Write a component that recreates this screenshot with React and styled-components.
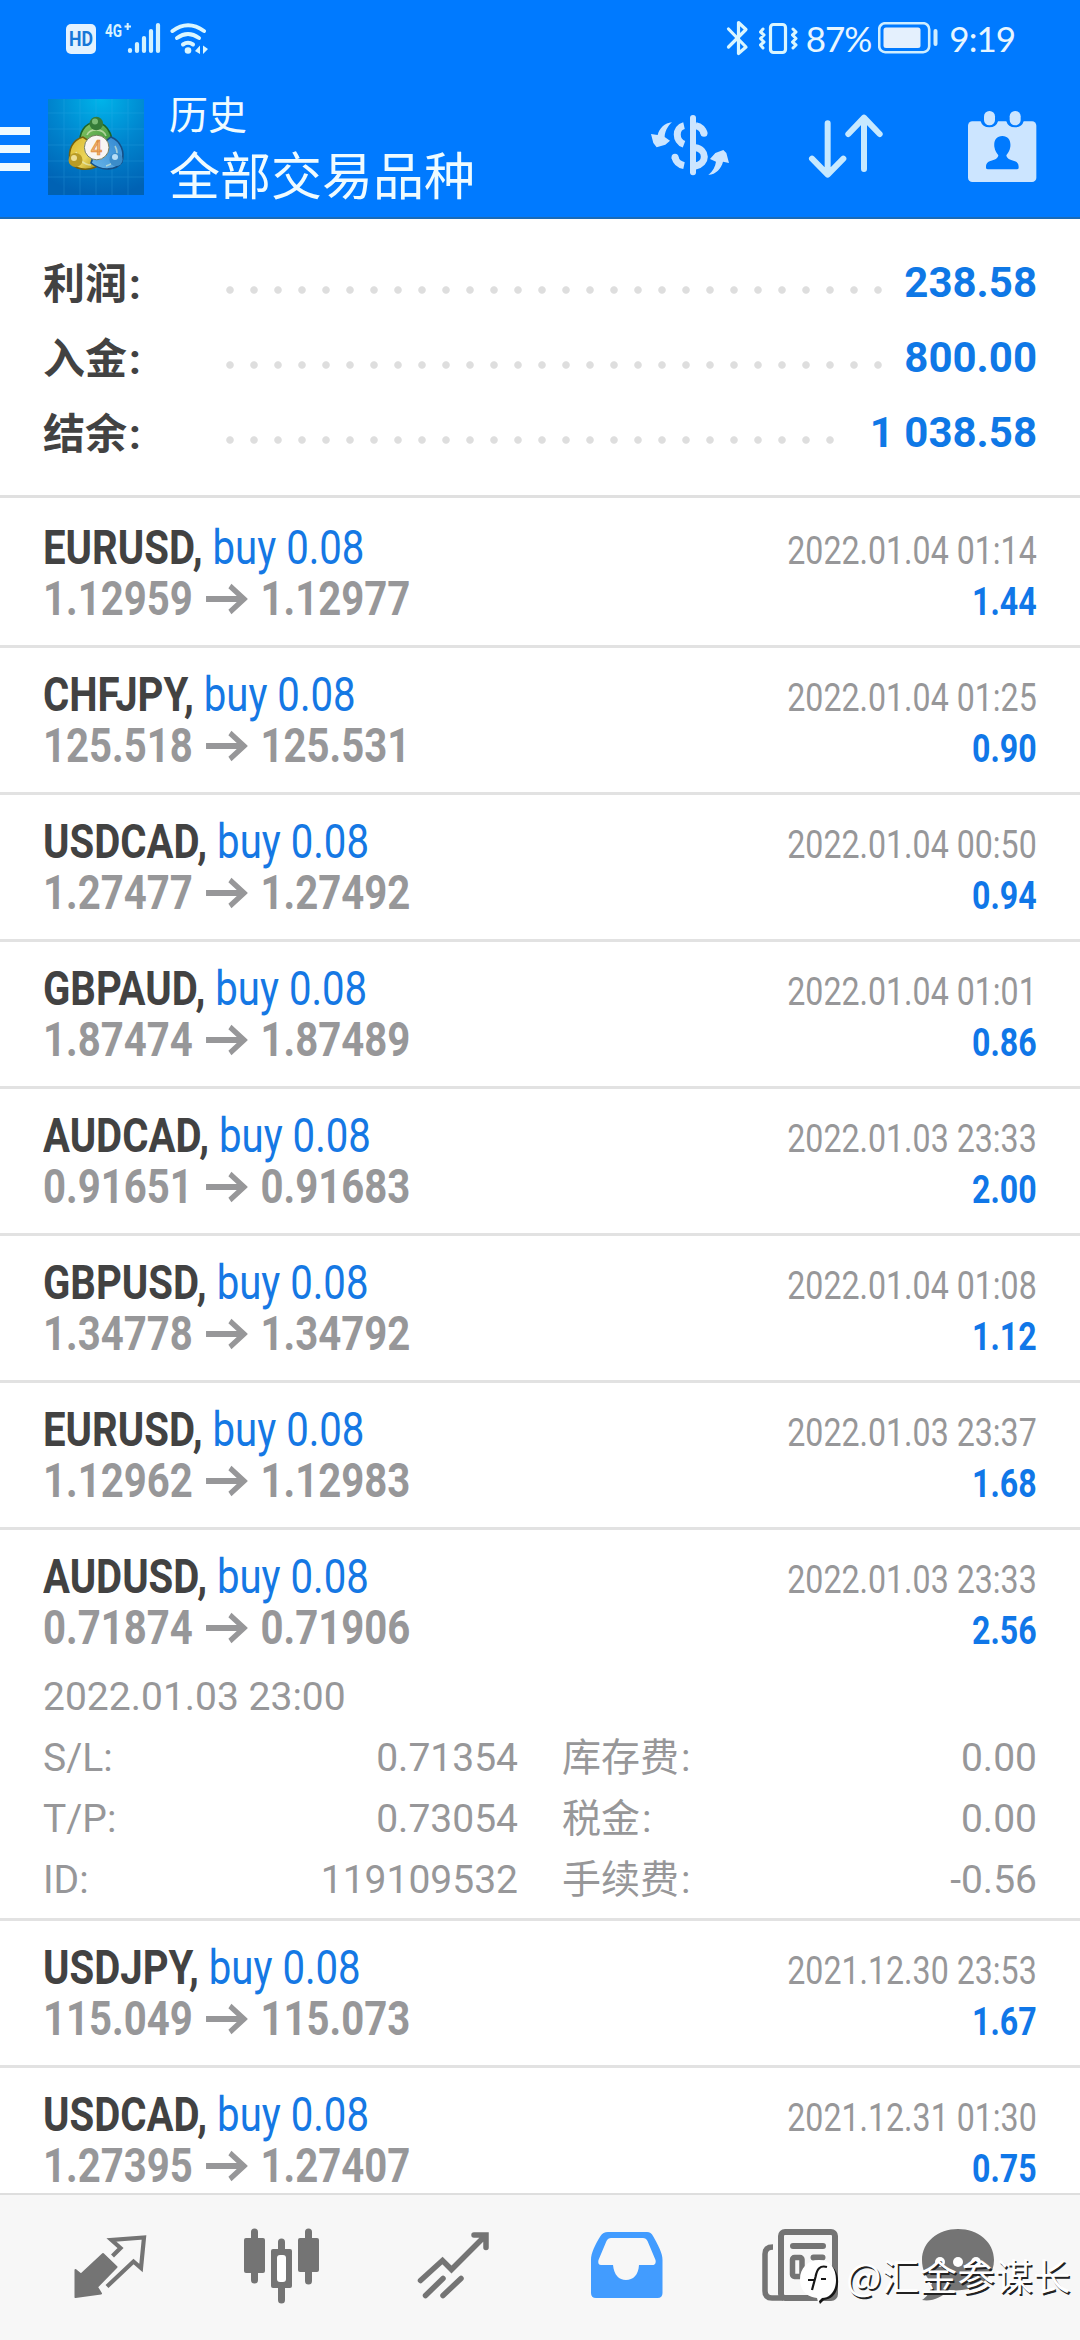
import React from "react";
import styled, { createGlobalStyle } from "styled-components";

const GlobalStyle = createGlobalStyle`
  * { box-sizing: border-box; }
  html, body { margin: 0; padding: 0; background: #fff; }
`;

const BLUE = "#007aff";
const PALE = "#cce5ff";
const GRAY = "#747474";

const Screen = styled.div`
  width: 1080px;
  height: 2340px;
  display: flex;
  flex-direction: column;
  overflow: hidden;
  background: #fff;
  font-family: Roboto, "Noto Sans CJK SC", sans-serif;
`;

const Header = styled.header`
  flex: none;
  height: 219px;
  background: ${BLUE};
  border-bottom: 2px solid #1a6bb8;
`;

const StatusBar = styled.div`
  height: 75px;
  display: flex;
  justify-content: space-between;
  padding: 0 65px;
`;

const StatusGroup = styled.div`
  display: flex;
  align-items: center;
`;

const StatusText = styled.span`
  font-family: Lato, Roboto, sans-serif;
  font-size: 35px;
  line-height: 75px;
  letter-spacing: -1px;
  color: #e8f6ff;
  margin: 2px ${(p) => p.$right || 0}px 0 ${(p) => p.$left || 0}px;
`;

const Toolbar = styled.div`
  display: flex;
  height: 142px;
`;

const Burger = styled.div`
  width: 30px;
  display: flex;
  flex-direction: column;
  gap: 10px;
  padding-top: 52px;
  margin-right: 18px;
`;

const BurgerLine = styled.span`
  height: 8px;
  background: #ecfaff;
`;

const LogoBox = styled.div`
  width: 96px;
  padding-top: 24px;
  margin-right: 25px;
`;

const Titles = styled.div`
  flex: 1;
  padding-top: 16px;
  color: #effbff;
`;

const Caption = styled.div`
  font-size: 39px;
  line-height: 50px;
`;

const Title = styled.div`
  font-size: 51px;
  line-height: 60px;
  margin-top: 7px;
`;

const Actions = styled.div`
  display: grid;
  grid-template-columns: repeat(3, 156px);
  place-items: center;
`;

const Summary = styled.section`
  flex: none;
  height: 279px;
  padding: 26px 43px 0;
  border-bottom: 3px solid #e0e0e0;
`;

const SummaryRow = styled.div`
  display: flex;
  height: 75px;
  font-size: 42px;
  font-weight: 700;
  line-height: 75px;
`;

const SummaryLabel = styled.span`
  width: 183px;
  padding-top: 2px;
  color: #424242;
`;

const Colon = styled.span`
  margin-left: 2px;
`;

const Leader = styled.span`
  width: ${(p) => p.$count * 24}px;
  height: 8px;
  margin-top: 41px;
  background: radial-gradient(circle at 4px 4px, #dedede 3.3px, transparent 4.2px) 0 0 / 24px 8px repeat-x;
`;

const SummaryValue = styled.span`
  flex: 1;
  text-align: right;
  color: #0f78e6;
`;

const List = styled.main`
  flex: 1;
  min-height: 0;
  overflow: hidden;
  padding-top: 3px;
`;

const Deal = styled.article`
  padding: 21px 43px ${(p) => (p.$open ? 7 : 21)}px;
  border-bottom: 3px solid #e2e2e2;
`;

const DealMain = styled.div`
  display: flex;
  justify-content: space-between;
  height: 102px;
`;

const Left = styled.div`
  font-size: 48px;
  line-height: 51px;
  white-space: nowrap;
  transform: scaleX(0.836);
  transform-origin: 0 0;
`;

const Right = styled.div`
  padding-top: 4px;
  font-size: 39px;
  line-height: 51px;
  text-align: right;
  white-space: nowrap;
  color: #979799;
  transform: scaleX(0.824);
  transform-origin: 100% 0;
`;

const Symbol = styled.span`
  font-weight: 700;
  color: #424242;
`;

const Volume = styled.span`
  color: #1578e4;
`;

const Prices = styled.div`
  display: flex;
  align-items: center;
  font-weight: 700;
  color: #979799;
`;

const ArrowIcon = styled.svg`
  width: 51px;
  height: 32px;
  margin: 0 15px;
`;

const Profit = styled.div`
  font-weight: 700;
  color: #1077e8;
`;

const Details = styled.div`
  margin-top: 14px;
  display: grid;
  grid-template-columns: 475px 475px;
  column-gap: 44px;
  font-size: 39px;
  line-height: 61px;
  color: #979799;
`;

const OpenTime = styled.div`
  grid-column: 1 / -1;
`;

const Detail = styled.div`
  display: flex;
  justify-content: space-between;
`;

const Nav = styled.nav`
  position: relative;
  flex: none;
  height: 147px;
  background: #f7f7f7;
  border-top: 2px solid #dedede;
  display: grid;
  grid-template-columns: 172px 172px 172px 174px 172px 144px;
  padding: 32px 0 0 24px;
  justify-items: center;
  align-items: start;
`;

const Watermark = styled.div`
  position: absolute;
  right: 9px;
  top: 61px;
  display: flex;
  align-items: flex-start;
  gap: 6px;
  color: #fff;
  font-family: "Noto Sans CJK SC", sans-serif;
  font-size: 37.3px;
  line-height: 38px;
  letter-spacing: 0.5px;
  text-shadow: 1.5px 1.5px 0 #222;
`;

const WatermarkIcon = styled.svg`
  width: 40px;
  height: 46px;
  margin-top: 3px;
`;

const NavIcon = ({ x, children }) => (
  <svg width="80" height="80" viewBox={`${x} 2227 80 80`} fill="none">
    {children}
  </svg>
);

const Logo = () => (
  <svg width="96" height="96" viewBox="0 0 96 96">
    <defs>
      <radialGradient id="sky" cx="0.55" cy="0" r="1">
        <stop offset="0" stopColor="#00b4ea" />
        <stop offset="0.5" stopColor="#0086cf" />
        <stop offset="1" stopColor="#0062b4" />
      </radialGradient>
      <linearGradient id="green" x1="0" y1="0" x2="1" y2="1">
        <stop offset="0" stopColor="#8cc866" />
        <stop offset="1" stopColor="#2b8a35" />
      </linearGradient>
      <linearGradient id="gold" x1="0" y1="0" x2="1" y2="1">
        <stop offset="0" stopColor="#d8b62a" />
        <stop offset="0.6" stopColor="#ecd65c" />
        <stop offset="1" stopColor="#a58a12" />
      </linearGradient>
      <linearGradient id="azure" x1="1" y1="0" x2="0" y2="1">
        <stop offset="0" stopColor="#2f86d0" />
        <stop offset="1" stopColor="#6ab6ea" />
      </linearGradient>
    </defs>
    <rect width="96" height="96" fill="url(#sky)" />
    <path d="M0 14H96M0 30H96M0 46H96M0 62H96M0 78H96M16 0V96M32 0V96M48 0V96M64 0V96M80 0V96" stroke="#45b5ee" strokeWidth="1" opacity="0.22" />
    <g strokeWidth="1.6">
      <path d="M48 23C36 24 31 34 32 45L47 52L63 54C67 41 62 25 48 23Z" fill="url(#green)" stroke="#1d6526" />
      <path d="M35 38C24 41 20 51 22 62C27 71 38 72 48 68L50 48Z" fill="url(#gold)" stroke="#75610c" />
      <path d="M63 38C73 42 77 53 74 63C69 71 54 73 43 64L48 50Z" fill="url(#azure)" stroke="#164f86" />
    </g>
    <path d="M39 36C42 29 55 29 58 37M28 53C30 60 36 66 43 66M67 47C71 54 69 64 58 67" fill="none" stroke="#e8f2cf" strokeWidth="1.600" opacity="0.6" />
    <circle cx="48.3" cy="24.5" r="6.8" fill="#357b38" />
    <circle cx="47" cy="22.5" r="3" fill="#8cc983" opacity="0.8" />
    <circle cx="27.5" cy="61" r="7" fill="#b99b26" />
    <circle cx="26" cy="59" r="3" fill="#f3e6a0" opacity="0.9" />
    <circle cx="68" cy="60.5" r="6.6" fill="#3b8cc9" />
    <circle cx="67" cy="58" r="3" fill="#c4e6fb" opacity="0.9" />
    <circle cx="48.7" cy="48.5" r="12.3" fill="#f9f5f3" stroke="#777f62" strokeWidth="1" />
    <text x="48.5" y="55.500" textAnchor="middle" fontFamily="Roboto" fontWeight="500" fontSize="20" fill="#f2b46a" stroke="#dc8940" strokeWidth="0.7">4</text>
  </svg>
);

const SignalIcons = () => (
  <svg width="146" height="40" viewBox="64 17 146 40">
    <rect x="65" y="23" width="30" height="30" rx="5" fill="#e3f2ff" />
    <text x="80" y="45" textAnchor="middle" fontFamily="Roboto" fontWeight="700" fontSize="19.500" textLength="24" lengthAdjust="spacingAndGlyphs" fill="#1777d8">HD</text>
    <text x="104" y="35.5" fontFamily="Roboto" fontWeight="700" fontSize="19" textLength="17" lengthAdjust="spacingAndGlyphs" fill="#d9f2ff">4G</text>
    <path d="M123.5 25.5H130M126.7 22V29" stroke="#d9f2ff" strokeWidth="2" />
    <path d="M129 49V50M136 43V50M143 37V50M150 30V50M157 24V50" stroke="#d3f2ff" strokeWidth="4.2" strokeLinecap="round" />
    <g fill="none" stroke="#d9f6ff" strokeWidth="4" strokeLinecap="round">
      <path d="M171.500 30Q187 18.500 203 30" />
      <path d="M176 37Q187 29 198 37" />
      <path d="M182 43.500Q187 40 192 43.500" />
    </g>
    <circle cx="187" cy="49.500" r="3.300" fill="#d9f6ff" />
    <path d="M199 44.500V53L194 50ZM202 44.500V53L207 48Z" fill="#d9f6ff" />
  </svg>
);

const DeviceIcons = () => (
  <svg width="72" height="36" viewBox="728 19 72 36" fill="none" stroke="#d9f6ff" strokeWidth="3.200" strokeLinejoin="round" strokeLinecap="round">
    <path d="M730.500 28L748 46L740.500 52.500V21.500L748 28.500L730.500 46" />
    <rect x="772.500" y="23.500" width="15" height="28" rx="3" />
    <path d="M765 28L762.500 31L766 34L762.500 37.500L766 41L762.500 44L765 47M795 28L798 31L794.500 34L798 37.500L794.500 41L798 44L795 47" strokeWidth="3" />
  </svg>
);

const Battery = () => (
  <svg width="60" height="32" viewBox="878 22 60 32">
    <rect x="879.200" y="23.200" width="50" height="29" rx="6" fill="none" stroke="#cfeeff" strokeWidth="2.600" />
    <rect x="883.500" y="27.500" width="37" height="20.500" rx="2.500" fill="#e4f0fd" />
    <rect x="933.500" y="29" width="4" height="17" rx="2" fill="#cfeeff" />
  </svg>
);

const CurrencyIcon = () => (
  <svg width="84" height="66" viewBox="24 38 252 198" fill="none" stroke={PALE} strokeWidth="21">
    <path d="M159 53V216" strokeWidth="18" strokeLinecap="round" />
    <path d="M132 76C105 82 105 122 132 132" />
    <path d="M105 171C108 185 118 193 132 196" />
    <circle cx="105" cy="171" r="10.500" fill={PALE} stroke="none" />
    <path d="M167 76C181 79 189 87 192 99" />
    <circle cx="192" cy="99" r="10.500" fill={PALE} stroke="none" />
    <path d="M166 142C202 148 202 190 166 197" />
    <path d="M96 66C82 78 74 96 74 110L90 121L76 133L50 141L40 128L33 101L53 104C58 84 74 68 96 66ZM205 224C219 212 226 198 228 184L210 176L226 158L250 149L259 158L267 188L249 184C244 204 228 222 205 224Z" fill={PALE} stroke="none" />
  </svg>
);

const SortIcon = () => (
  <svg width="78" height="68" viewBox="622 337 234 204" fill="none" stroke="#c6e9ff" strokeWidth="18" strokeLinecap="round" strokeLinejoin="round">
    <path d="M684 371V524M637 477L684 525L731 477M793 508V356M746 403L793 354L840 403" />
  </svg>
);

const CalendarIcon = () => (
  <svg width="71" height="74" viewBox="1100 326 213 222">
    <rect x="1103" y="363" width="205" height="182" rx="13" fill={PALE} />
    <path d="M1141 355V363Q1146 381 1167 381Q1188 381 1193 363V355ZM1218 355V363Q1223 381 1244 381Q1265 381 1270 363V355Z" fill={BLUE} />
    <rect x="1151" y="332" width="33" height="43" rx="16" fill={PALE} />
    <rect x="1228" y="332" width="33" height="43" rx="16" fill={PALE} />
    <path d="M1206 407C1188 407 1180 420 1182 439C1184 452 1190 459 1194 465C1193 476 1180 479 1168 483C1158 487 1157 494 1157 502Q1157 507 1163 507H1249Q1255 507 1255 502C1255 494 1254 487 1244 483C1232 479 1219 476 1218 465C1222 459 1228 452 1230 439C1232 420 1224 407 1206 407Z" fill={BLUE} />
  </svg>
);

const PriceArrow = () => (
  <ArrowIcon viewBox="0 0 50 32" preserveAspectRatio="none" fill="none" stroke="#979799" strokeWidth="5.800">
    <path d="M1 16H46M29 3L45.500 16L29 29" />
  </ArrowIcon>
);

const totals = [
  { label: "利润", value: "238.58", dots: 28 },
  { label: "入金", value: "800.00", dots: 28 },
  { label: "结余", value: "1 038.58", dots: 26 },
];

const deals = [
  { symbol: "EURUSD", from: "1.12959", to: "1.12977", time: "2022.01.04 01:14", profit: "1.44" },
  { symbol: "CHFJPY", from: "125.518", to: "125.531", time: "2022.01.04 01:25", profit: "0.90" },
  { symbol: "USDCAD", from: "1.27477", to: "1.27492", time: "2022.01.04 00:50", profit: "0.94" },
  { symbol: "GBPAUD", from: "1.87474", to: "1.87489", time: "2022.01.04 01:01", profit: "0.86" },
  { symbol: "AUDCAD", from: "0.91651", to: "0.91683", time: "2022.01.03 23:33", profit: "2.00" },
  { symbol: "GBPUSD", from: "1.34778", to: "1.34792", time: "2022.01.04 01:08", profit: "1.12" },
  { symbol: "EURUSD", from: "1.12962", to: "1.12983", time: "2022.01.03 23:37", profit: "1.68" },
  {
    symbol: "AUDUSD", from: "0.71874", to: "0.71906", time: "2022.01.03 23:33", profit: "2.56",
    opened: "2022.01.03 23:00",
    details: [
      ["S/L", "0.71354"], ["库存费", "0.00"],
      ["T/P", "0.73054"], ["税金", "0.00"],
      ["ID", "119109532"], ["手续费", "-0.56"],
    ],
  },
  { symbol: "USDJPY", from: "115.049", to: "115.073", time: "2021.12.30 23:53", profit: "1.67" },
  { symbol: "USDCAD", from: "1.27395", to: "1.27407", time: "2021.12.31 01:30", profit: "0.75" },
];

const isLatin = (text) => /^[A-Z/]+$/.test(text);

const DealRow = ({ deal }) => (
  <Deal $open={!!deal.details}>
    <DealMain>
      <Left>
        <div>
          <Symbol>{deal.symbol},</Symbol> <Volume>buy 0.08</Volume>
        </div>
        <Prices>
          {deal.from}
          <PriceArrow />
          {deal.to}
        </Prices>
      </Left>
      <Right>
        <div>{deal.time}</div>
        <Profit>{deal.profit}</Profit>
      </Right>
    </DealMain>
    {deal.details && (
      <Details>
        <OpenTime>{deal.opened}</OpenTime>
        {deal.details.map(([label, value]) => (
          <Detail key={label}>
            <span>
              {label}
              {isLatin(label) ? ":" : <Colon>:</Colon>}
            </span>
            <span>{value}</span>
          </Detail>
        ))}
      </Details>
    )}
  </Deal>
);

const BottomNav = () => (
  <Nav>
    <NavIcon x={70}>
      <path d="M103 2254L116.500 2267L97 2287L101 2293.500L75.500 2297V2270L81 2274.500Z" fill={GRAY} stroke={GRAY} strokeWidth="2" strokeLinejoin="round" />
      <path d="M112.500 2256L120.500 2248L111.500 2240L144 2237.500L141 2268L133.500 2261.500L107 2286.500" stroke={GRAY} strokeWidth="4.200" />
    </NavIcon>
    <NavIcon x={242}>
      <path d="M254.500 2232V2280M281.500 2242V2300M308.500 2232V2281" stroke={GRAY} strokeWidth="7" strokeLinecap="round" />
      <rect x="244" y="2238" width="21" height="35" rx="2" fill={GRAY} />
      <rect x="298" y="2238" width="21" height="34" rx="2" fill={GRAY} />
      <rect x="271" y="2249" width="21" height="39" rx="2" fill={GRAY} />
      <rect x="277" y="2255" width="9" height="27" rx="3" fill="#fff" />
    </NavIcon>
    <NavIcon x={414}>
      <path d="M420.500 2280.500L442.500 2260.500L451.500 2269.500L485 2236M474 2235H486V2247.500M425.500 2295.500L443 2278.500M443 2295.500L461 2278.500" stroke={GRAY} strokeWidth="5.500" strokeLinecap="round" />
    </NavIcon>
    <NavIcon x={587}>
      <path fillRule="evenodd" d="M608 2232H647Q651 2232 653 2236C658 2245 662.500 2253 662.500 2260V2293Q662.500 2298 657.500 2298H596Q591 2298 591 2293V2260C591 2253 595 2245 600.500 2236Q603 2232 608 2232ZM611 2238Q608 2238 606.500 2241L598.500 2260Q597.500 2265 601 2265H613C614 2275 619 2280 626 2280S638.500 2275 639 2265H652Q656.500 2265 655.500 2260L647.500 2241Q646 2238 643 2238Z" fill="#429cff" />
    </NavIcon>
    <NavIcon x={760}>
      <rect x="781" y="2232" width="54" height="66" rx="4" stroke={GRAY} strokeWidth="6" />
      <path d="M773 2247Q765 2247 765 2254V2291Q765 2298 772 2298H783" stroke={GRAY} strokeWidth="5.500" />
      <path d="M793 2246H823M813.500 2257.500H822.500" stroke={GRAY} strokeWidth="6" strokeLinecap="round" />
      <rect x="792.500" y="2257.500" width="9.500" height="19" rx="2" stroke={GRAY} strokeWidth="5.500" />
    </NavIcon>
    <NavIcon x={918}>
      <path d="M958 2229C938 2229 922 2242 922 2260C922 2270 926 2277 932 2283C931 2291 927 2297 922 2300C932 2302 942 2297 949 2290C976 2293 994 2279 994 2260C994 2242 978 2229 958 2229Z" fill={GRAY} />
      <circle cx="940" cy="2262" r="5" fill="#fff" />
      <circle cx="958" cy="2262" r="5" fill="#fff" />
      <circle cx="976" cy="2262" r="5" fill="#fff" />
    </NavIcon>
    <Watermark>
      <WatermarkIcon viewBox="0 0 40 46">
        <path d="M24 3C34 6 39 14 38 25C37 36 31 40 24 41L20 45L18 40Z" fill="#161616" />
        <path d="M19 1C30 1 36 9 36 21C36 32 30 39 22 39L18 43L17 39C7 38 0 32 0 20C0 9 8 1 19 1Z" fill="#fff" />
        <path d="M27 8C20 6 17 10 15.500 18L12 31M8 21H15M21 20H26" fill="none" stroke="#161616" strokeWidth="2.200" />
      </WatermarkIcon>
      <span>@汇金参谋长</span>
    </Watermark>
  </Nav>
);

export default function App() {
  return (
    <Screen>
      <GlobalStyle />
      <Header>
        <StatusBar>
          <StatusGroup>
            <SignalIcons />
          </StatusGroup>
          <StatusGroup>
            <DeviceIcons />
            <StatusText $left={8} $right={7}>87%</StatusText>
            <Battery />
            <StatusText $left={11}>9:19</StatusText>
          </StatusGroup>
        </StatusBar>
        <Toolbar>
          <Burger>
            <BurgerLine />
            <BurgerLine />
            <BurgerLine />
          </Burger>
          <LogoBox>
            <Logo />
          </LogoBox>
          <Titles>
            <Caption>历史</Caption>
            <Title>全部交易品种</Title>
          </Titles>
          <Actions>
            <CurrencyIcon />
            <SortIcon />
            <CalendarIcon />
          </Actions>
        </Toolbar>
      </Header>
      <Summary>
        {totals.map((t) => (
          <SummaryRow key={t.label}>
            <SummaryLabel>
              {t.label}
              <Colon>:</Colon>
            </SummaryLabel>
            <Leader $count={t.dots} />
            <SummaryValue>{t.value}</SummaryValue>
          </SummaryRow>
        ))}
      </Summary>
      <List>
        {deals.map((deal) => (
          <DealRow key={deal.symbol + deal.from} deal={deal} />
        ))}
      </List>
      <BottomNav />
    </Screen>
  );
}
